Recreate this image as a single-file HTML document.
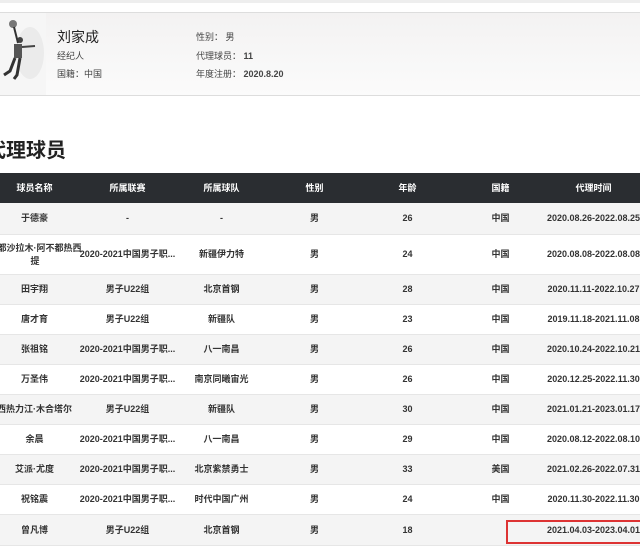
<!DOCTYPE html>
<html><head><meta charset="utf-8"><style>
*{margin:0;padding:0;box-sizing:border-box}
body{width:640px;height:546px;overflow:hidden;background:#fff;font-family:"Liberation Sans","Noto Sans CJK SC",sans-serif;position:relative;color:#333}
.topline{position:absolute;left:0;top:0;width:640px;height:3px;background:#eee}
.card{position:absolute;left:0;top:12px;width:640px;height:84px;border-top:1px solid #ddd;border-bottom:1px solid #ddd;background:linear-gradient(#f3f2f2,#fbfbfb)}
.img{position:absolute;left:0;top:0;width:46px;height:82px;background:#f6f6f6}
.t{position:absolute;font-size:9px;color:#444;white-space:nowrap}
.name{position:absolute;left:57px;top:27px;font-size:14px;color:#222}
h2{position:absolute;left:-14px;top:134px;font-size:20px;font-weight:bold;color:#222}
.row{position:absolute;left:0;width:640px;border-bottom:1px solid #e6e6e6}
.c{position:absolute;top:0;height:100%;width:93px;display:flex;align-items:center;justify-content:center;text-align:center;font-size:9px;font-weight:bold;color:#333;line-height:13px;white-space:nowrap}
.c span.w{display:block;width:98px;white-space:normal;word-break:break-all;text-align:center}
.hd{background:#2a2d31;border:none}
.hd .c{color:#fff}
.g{background:#f4f4f4}
.red{position:absolute;left:506px;top:520px;width:140px;height:24px;border:2px solid #d33}
</style></head><body>
<div class="topline"></div>
<div class="card">
<div class="img"><svg width="46" height="82" viewBox="0 0 46 82"><ellipse cx="30" cy="40" rx="14" ry="26" fill="#ebebeb"/><circle cx="13" cy="11" r="4" fill="#777"/><circle cx="20" cy="27" r="3" fill="#444"/><path d="M14 14 L18 30" stroke="#333" stroke-width="2"/><rect x="14" y="31" width="8" height="14" fill="#555"/><path d="M22 34 L35 33" stroke="#444" stroke-width="2"/><path d="M15 45 L10 58 L4 62 M20 45 L17 62 L14 66" stroke="#333" stroke-width="3" fill="none"/></svg></div>
</div>
<div class="name">刘家成</div>
<div class="t" style="left:57px;top:49px">经纪人</div>
<div class="t" style="left:57px;top:67px">国籍：中国</div>
<div class="t" style="left:196px;top:30px">性别： 男</div>
<div class="t" style="left:196px;top:49px">代理球员： <b>11</b></div>
<div class="t" style="left:196px;top:67px">年度注册： <b>2020.8.20</b></div>
<h2>代理球员</h2>

<div class="row hd" style="top:173px;height:30px"><div class="c" style="left:-12px">球员名称</div><div class="c" style="left:81px">所属联赛</div><div class="c" style="left:175px">所属球队</div><div class="c" style="left:268px">性别</div><div class="c" style="left:361px">年龄</div><div class="c" style="left:454px">国籍</div><div class="c" style="left:547px">代理时间</div></div>

<div class="row g" style="top:203px;height:32px"><div class="c" style="left:-12px">于德豪</div><div class="c" style="left:81px">-</div><div class="c" style="left:175px">-</div><div class="c" style="left:268px">男</div><div class="c" style="left:361px">26</div><div class="c" style="left:454px">中国</div><div class="c" style="left:547px">2020.08.26-2022.08.25</div></div>
<div class="row" style="top:235px;height:40px"><div class="c" style="left:-14px;width:98px"><span class="w">不都沙拉木·阿不都热西提</span></div><div class="c" style="left:81px">2020-2021中国男子职...</div><div class="c" style="left:175px">新疆伊力特</div><div class="c" style="left:268px">男</div><div class="c" style="left:361px">24</div><div class="c" style="left:454px">中国</div><div class="c" style="left:547px">2020.08.08-2022.08.08</div></div>
<div class="row g" style="top:275px;height:30px"><div class="c" style="left:-12px">田宇翔</div><div class="c" style="left:81px">男子U22组</div><div class="c" style="left:175px">北京首钢</div><div class="c" style="left:268px">男</div><div class="c" style="left:361px">28</div><div class="c" style="left:454px">中国</div><div class="c" style="left:547px">2020.11.11-2022.10.27</div></div>
<div class="row" style="top:305px;height:30px"><div class="c" style="left:-12px">唐才育</div><div class="c" style="left:81px">男子U22组</div><div class="c" style="left:175px">新疆队</div><div class="c" style="left:268px">男</div><div class="c" style="left:361px">23</div><div class="c" style="left:454px">中国</div><div class="c" style="left:547px">2019.11.18-2021.11.08</div></div>
<div class="row g" style="top:335px;height:30px"><div class="c" style="left:-12px">张祖铭</div><div class="c" style="left:81px">2020-2021中国男子职...</div><div class="c" style="left:175px">八一南昌</div><div class="c" style="left:268px">男</div><div class="c" style="left:361px">26</div><div class="c" style="left:454px">中国</div><div class="c" style="left:547px">2020.10.24-2022.10.21</div></div>
<div class="row" style="top:365px;height:30px"><div class="c" style="left:-12px">万圣伟</div><div class="c" style="left:81px">2020-2021中国男子职...</div><div class="c" style="left:175px">南京同曦宙光</div><div class="c" style="left:268px">男</div><div class="c" style="left:361px">26</div><div class="c" style="left:454px">中国</div><div class="c" style="left:547px">2020.12.25-2022.11.30</div></div>
<div class="row g" style="top:395px;height:30px"><div class="c" style="left:-12px">西热力江·木合塔尔</div><div class="c" style="left:81px">男子U22组</div><div class="c" style="left:175px">新疆队</div><div class="c" style="left:268px">男</div><div class="c" style="left:361px">30</div><div class="c" style="left:454px">中国</div><div class="c" style="left:547px">2021.01.21-2023.01.17</div></div>
<div class="row" style="top:425px;height:30px"><div class="c" style="left:-12px">余晨</div><div class="c" style="left:81px">2020-2021中国男子职...</div><div class="c" style="left:175px">八一南昌</div><div class="c" style="left:268px">男</div><div class="c" style="left:361px">29</div><div class="c" style="left:454px">中国</div><div class="c" style="left:547px">2020.08.12-2022.08.10</div></div>
<div class="row g" style="top:455px;height:30px"><div class="c" style="left:-12px">艾派·尤度</div><div class="c" style="left:81px">2020-2021中国男子职...</div><div class="c" style="left:175px">北京紫禁勇士</div><div class="c" style="left:268px">男</div><div class="c" style="left:361px">33</div><div class="c" style="left:454px">美国</div><div class="c" style="left:547px">2021.02.26-2022.07.31</div></div>
<div class="row" style="top:485px;height:30px"><div class="c" style="left:-12px">祝铭震</div><div class="c" style="left:81px">2020-2021中国男子职...</div><div class="c" style="left:175px">时代中国广州</div><div class="c" style="left:268px">男</div><div class="c" style="left:361px">24</div><div class="c" style="left:454px">中国</div><div class="c" style="left:547px">2020.11.30-2022.11.30</div></div>
<div class="row g" style="top:515px;height:31px"><div class="c" style="left:-12px">曾凡博</div><div class="c" style="left:81px">男子U22组</div><div class="c" style="left:175px">北京首钢</div><div class="c" style="left:268px">男</div><div class="c" style="left:361px">18</div><div class="c" style="left:454px"></div><div class="c" style="left:547px">2021.04.03-2023.04.01</div></div>
<div class="red"></div>
</body></html>
